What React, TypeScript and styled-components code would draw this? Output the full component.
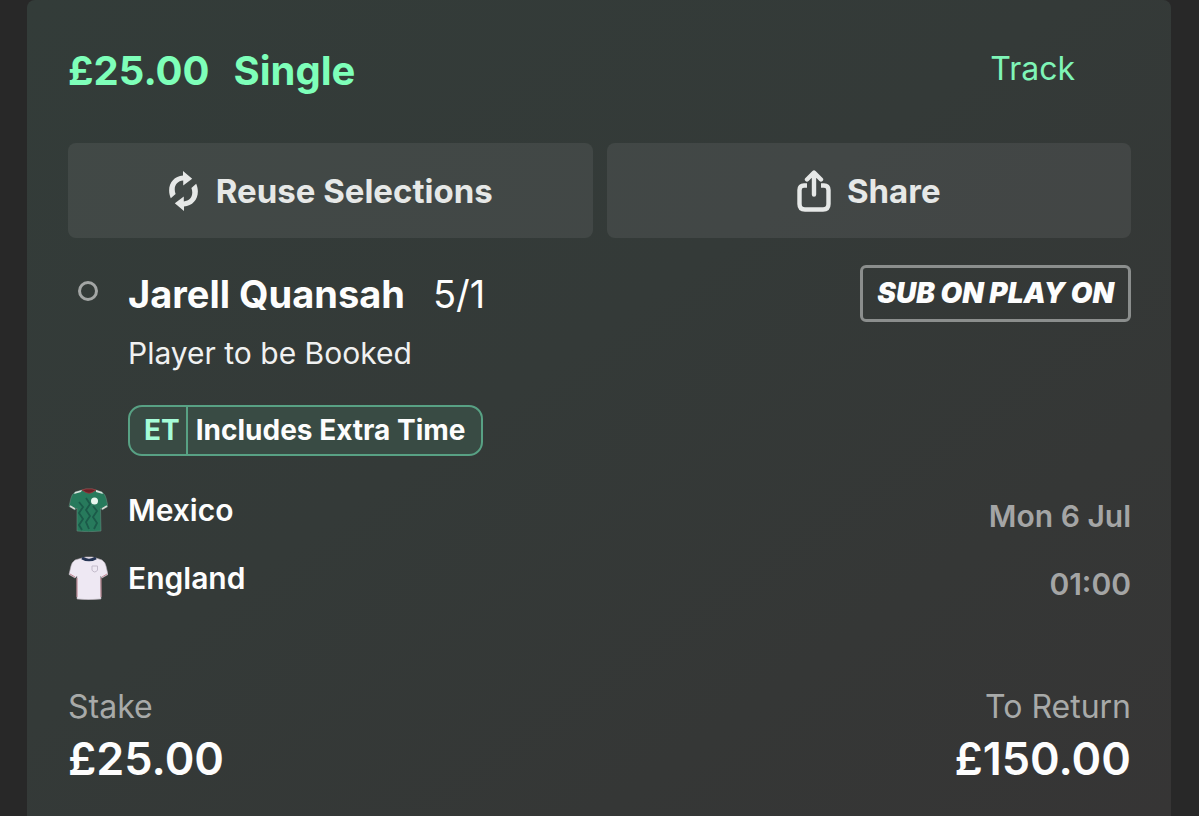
import React from "react";
import styled, { createGlobalStyle } from "styled-components";

const GlobalStyle = createGlobalStyle`
  *, *::before, *::after { box-sizing: border-box; }
  body {
    margin: 0;
    background: #282828;
    color: #fdfdfd;
    font-family: Inter, "Liberation Sans", sans-serif;
  }
  h1, h2, p, ul, dl, dd { margin: 0; padding: 0; }
  button { font: inherit; border: 0; padding: 0; cursor: pointer; }
`;

const Page = styled.main`
  display: flex;
  min-height: 100vh;
  padding: 0 28px 0 27px;
`;

const BetCard = styled.article`
  flex: 1;
  min-width: 0;
  padding: 47px 40px 32px 41px;
  border-radius: 8px 8px 0 0;
  background: linear-gradient(145deg, #333c39 0%, #343a38 45%, #353736 75%, #363535 100%);
`;

const Header = styled.header`
  display: flex;
  justify-content: space-between;
  align-items: center;
  padding-right: 56px;
`;

const Title = styled.h1`
  display: flex;
  gap: 24px;
  font-size: 40px;
  line-height: 48px;
  font-weight: 700;
  color: #7effb9;
`;

const TrackButton = styled.button`
  background: none;
  font-size: 32px;
  line-height: 44px;
  color: #7ff5b7;
  padding-bottom: 4px;
`;

const Actions = styled.div`
  display: grid;
  grid-template-columns: 1fr 1fr;
  gap: 14px;
  margin-top: 48px;
`;

const ActionButton = styled.button`
  display: flex;
  justify-content: center;
  align-items: center;
  gap: 16px;
  height: 95px;
  border-radius: 8px;
  background: rgba(255, 255, 255, 0.07);
  color: #e6e8e7;
  font-size: 33px;
  font-weight: 700;
`;

const Selection = styled.section`
  display: grid;
  grid-template-columns: 40px 1fr;
  column-gap: 20px;
  margin-top: 27px;
`;

const StatusRing = styled.span`
  justify-self: center;
  width: 20px;
  height: 20px;
  margin-top: 16px;
  border: 3px solid #a3a6a5;
  border-radius: 50%;
`;

const SelectionHead = styled.div`
  display: flex;
  justify-content: space-between;
  align-items: center;
`;

const Player = styled.h2`
  display: flex;
  gap: 28px;
  font-size: 38px;
  line-height: 44px;
  font-weight: 700;
`;

const Odds = styled.span`
  font-weight: 400;
`;

const PromoTag = styled.span`
  padding: 0 14px;
  border: 3px solid #8b8e8d;
  border-radius: 6px;
  font-size: 28px;
  line-height: 51px;
  font-weight: 900;
  font-style: italic;
`;

const Market = styled.p`
  margin-top: 11px;
  font-size: 30px;
  line-height: 40px;
  color: #f0f1f1;
`;

const ExtraTime = styled.p`
  display: inline-flex;
  margin-top: 32px;
  border: 2px solid #58a184;
  border-radius: 14px;
  background: #394b44;
  font-size: 28px;
  line-height: 47px;
  font-weight: 700;
`;

const ExtraTimeCode = styled.span`
  padding: 0 6px 0 14px;
  border-right: 2px solid #58a184;
  color: #a5fcd8;
`;

const ExtraTimeLabel = styled.span`
  padding: 0 16px 0 8px;
`;

const Fixture = styled.section`
  display: flex;
  justify-content: space-between;
  margin-top: 20px;
`;

const Teams = styled.ul`
  list-style: none;
`;

const Team = styled.li`
  display: flex;
  align-items: center;
  gap: 20px;
  height: 68px;
  font-size: 30px;
  font-weight: 600;
`;

const Kickoff = styled.div`
  padding-top: 6px;
  text-align: right;
  font-size: 30px;
  line-height: 68px;
  font-weight: 600;
  color: #a4a5a5;
`;

const Totals = styled.dl`
  display: flex;
  justify-content: space-between;
  margin-top: 65px;
`;

const Total = styled.div<{ $end?: boolean }>`
  text-align: ${(p) => (p.$end ? "right" : "left")};
`;

const TotalLabel = styled.dt`
  font-size: 32px;
  line-height: 48px;
  color: #a8aaa9;
`;

const TotalAmount = styled.dd`
  font-size: 45px;
  line-height: 56px;
  font-weight: 600;
`;

const ReuseIcon = () => (
  <svg width="32" height="42" viewBox="0 0 32 42" aria-hidden="true">
    <g fill="#e6e8e7">
      <path d="M2.800 28.200C-2 17 4 6 15 5.400V1L24.200 8.800 15.200 15.600V10.600C8.500 11 5 17 7.600 24Z" />
      <path d="M28.200 13.800C33 25 27 36 16 36.600V41L6.800 33.200 15.800 26.400V31.400C22.500 31 26 25 23.400 18Z" />
    </g>
  </svg>
);

const ShareIcon = () => (
  <svg width="34" height="42" viewBox="0 0 34 42" aria-hidden="true">
    <g fill="none" stroke="#e6e8e7" strokeWidth="4.400" strokeLinecap="round" strokeLinejoin="round">
      <path d="M10 15.500H7Q2.500 15.500 2.500 20V34Q2.500 39.500 8 39.500H26Q31.500 39.500 31.500 34V20Q31.500 15.500 27 15.500H24" strokeLinecap="butt" />
      <path d="M17 24.500V3M10 9.500 17 2.500 24 9.500" />
    </g>
  </svg>
);

const SHIRT =
  "M14 2 18 1H24L28 2 34 4Q37 6 38 10L40 18.500 34 22 32.500 20 33 43Q20 44.500 9 43L9 20 7 22 1 18.500 3 10Q4 6 7 4Z";

const MexicoShirt = () => (
  <svg width="40" height="44" viewBox="0 0 40 44" aria-hidden="true">
    <path d={SHIRT} fill="#277a5c" stroke="#65877b" strokeWidth="0.6" />
    <g fill="none" stroke="#1b5a49" strokeWidth="1.800">
      <path d="M11 14l4 5-4 6 4 6-4 6 3 5" />
      <path d="M18 10l4 6-4 6 4 6-4 6 3 7" />
      <path d="M25 18l4 5-4 6 4 6-3 6" />
    </g>
    <path d="M14 2 7 4 6 6 13 4ZM28 2 34 4 35 6 28 4Z" fill="#dae4df" />
    <path d="M2 18 7 21M39 18 34 21" stroke="#d9d6d2" strokeWidth="1.600" />
    <path d="M14 2 18 1H24L28 2 24 4.500Q21 6 18 4.500Z" fill="#6b2027" stroke="#9b383d" strokeWidth="0.8" />
    <circle cx="26.500" cy="13" r="3.500" fill="#e7f6ee" />
  </svg>
);

const EnglandShirt = () => (
  <svg width="40" height="44" viewBox="0 0 40 44" aria-hidden="true">
    <path d={SHIRT} fill="#eee8f3" stroke="#b5acb6" strokeWidth="0.6" />
    <path d="M9 22V41M33 22V41M2 18 7 21M39 18 34 21" stroke="#c48a96" strokeWidth="1" />
    <path d="M14 2Q21 6 28 2" fill="none" stroke="#263554" strokeWidth="2.600" />
    <path d="M24 10H29.500V14Q29 15.500 26.700 16 24.500 15.500 24 14Z" fill="none" stroke="#c3bbcb" strokeWidth="1" />
  </svg>
);

export default function App() {
  return (
    <>
      <GlobalStyle />
      <Page>
        <BetCard>
          <Header>
            <Title>
              <span>£25.00</span>
              <span>Single</span>
            </Title>
            <TrackButton type="button">Track</TrackButton>
          </Header>
          <Actions>
            <ActionButton type="button">
              <ReuseIcon />
              Reuse Selections
            </ActionButton>
            <ActionButton type="button">
              <ShareIcon />
              Share
            </ActionButton>
          </Actions>
          <Selection>
            <StatusRing />
            <div>
              <SelectionHead>
                <Player>
                  Jarell Quansah
                  <Odds>5/1</Odds>
                </Player>
                <PromoTag>SUB ON PLAY ON</PromoTag>
              </SelectionHead>
              <Market>Player to be Booked</Market>
              <ExtraTime>
                <ExtraTimeCode>ET</ExtraTimeCode>
                <ExtraTimeLabel>Includes Extra Time</ExtraTimeLabel>
              </ExtraTime>
            </div>
          </Selection>
          <Fixture>
            <Teams>
              <Team>
                <MexicoShirt />
                Mexico
              </Team>
              <Team>
                <EnglandShirt />
                England
              </Team>
            </Teams>
            <Kickoff>
              <p>Mon 6 Jul</p>
              <p>01:00</p>
            </Kickoff>
          </Fixture>
          <Totals>
            <Total>
              <TotalLabel>Stake</TotalLabel>
              <TotalAmount>£25.00</TotalAmount>
            </Total>
            <Total $end>
              <TotalLabel>To Return</TotalLabel>
              <TotalAmount>£150.00</TotalAmount>
            </Total>
          </Totals>
        </BetCard>
      </Page>
    </>
  );
}
